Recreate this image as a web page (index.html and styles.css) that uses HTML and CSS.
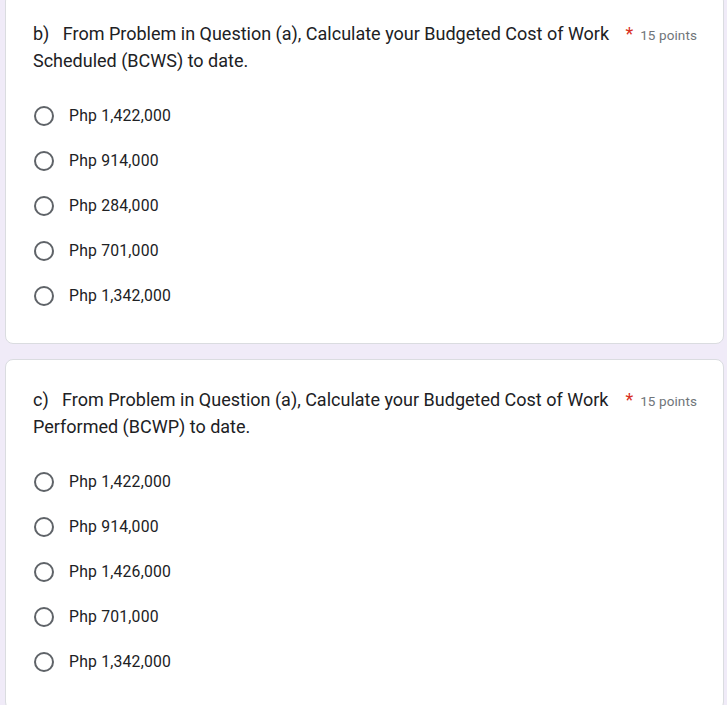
FILE: index.html
```html
<!DOCTYPE html>
<html>
<head>
<meta charset="utf-8">
<link rel="stylesheet" href="styles.css">
</head>
<body>
<div class="page">
  <div class="card">
    <div class="head">
      <div class="title">b)&nbsp;&nbsp; From Problem in Question (a), Calculate your Budgeted Cost of Work Scheduled (BCWS) to date.</div>
      <span class="req">*</span>
      <span class="pts">15 points</span>
    </div>
    <div class="options">
      <div class="opt"><span class="radio"></span><span class="label">Php 1,422,000</span></div>
      <div class="opt"><span class="radio"></span><span class="label">Php 914,000</span></div>
      <div class="opt"><span class="radio"></span><span class="label">Php 284,000</span></div>
      <div class="opt"><span class="radio"></span><span class="label">Php 701,000</span></div>
      <div class="opt"><span class="radio"></span><span class="label">Php 1,342,000</span></div>
    </div>
  </div>
  <div class="card">
    <div class="head">
      <div class="title">c)&nbsp;&nbsp; From Problem in Question (a), Calculate your Budgeted Cost of Work Performed (BCWP) to date.</div>
      <span class="req">*</span>
      <span class="pts">15 points</span>
    </div>
    <div class="options">
      <div class="opt"><span class="radio"></span><span class="label">Php 1,422,000</span></div>
      <div class="opt"><span class="radio"></span><span class="label">Php 914,000</span></div>
      <div class="opt"><span class="radio"></span><span class="label">Php 1,426,000</span></div>
      <div class="opt"><span class="radio"></span><span class="label">Php 701,000</span></div>
      <div class="opt"><span class="radio"></span><span class="label">Php 1,342,000</span></div>
    </div>
  </div>
</div>
</body>
</html>
```
FILE: styles.css
```css
html, body {
  margin: 0;
  padding: 0;
  background: #f0ebf8;
  font-family: Roboto, "Liberation Sans", sans-serif;
  color: #202124;
}
.page {
  margin-top: -7px;
  padding: 0 3px 0 5px;
  display: flex;
  flex-direction: column;
  gap: 15px;
}
.card {
  background: #fff;
  border: 1px solid #dadce0;
  border-radius: 8px;
  padding: 26px 26px 25px 27px;
}
.head {
  display: flex;
  align-items: baseline;
}
.title {
  flex: 1;
  font-size: 18px;
  line-height: 27px;
  letter-spacing: 0;
}
.req {
  color: #d93025;
  font-size: 18px;
  margin-left: 12px;
}
.pts {
  color: #70757a;
  font-size: 13.5px;
  letter-spacing: 0.1px;
  margin-left: 7px;
}
.options {
  margin-top: 19px;
  display: flex;
  flex-direction: column;
}
.opt {
  height: 45px;
  display: flex;
  align-items: center;
}
.radio {
  width: 16px;
  height: 16px;
  border: 2px solid #5f6368;
  border-radius: 50%;
  margin-left: 1px;
  margin-right: 15px;
  flex: none;
}
.label {
  font-size: 15.75px;
  letter-spacing: 0.2px;
}
```
